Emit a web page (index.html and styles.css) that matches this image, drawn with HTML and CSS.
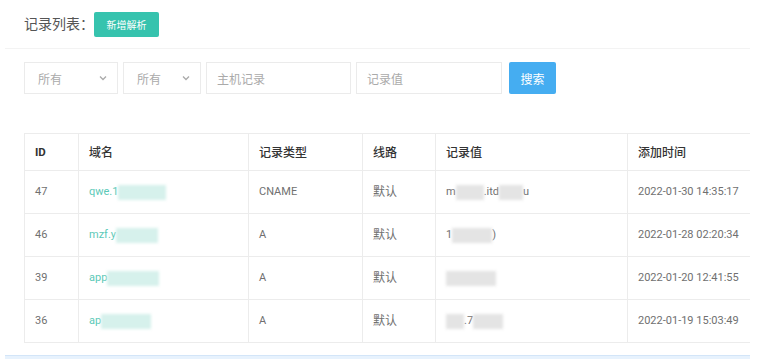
FILE: index.html
```html
<!DOCTYPE html>
<html lang="zh-CN">
<head>
  <meta charset="UTF-8">
  <title>记录列表</title>
  <link rel="stylesheet" href="styles.css">
</head>
<body>
  <div class="page">
    <div class="head">
      <span class="title">记录列表：</span>
      <button class="btn-add">新增解析</button>
    </div>

    <div class="filters">
      <div class="select w1">所有
        <svg class="chev" width="8" height="6" viewBox="0 0 8 6"><path d="M1 1.5 L4 4.5 L7 1.5" fill="none" stroke="#aaa" stroke-width="1.3"/></svg>
      </div>
      <div class="select w2">所有
        <svg class="chev" width="8" height="6" viewBox="0 0 8 6"><path d="M1 1.5 L4 4.5 L7 1.5" fill="none" stroke="#aaa" stroke-width="1.3"/></svg>
      </div>
      <div class="input w3">主机记录</div>
      <div class="input w4">记录值</div>
      <button class="btn-search">搜索</button>
    </div>

    <table class="list">
      <colgroup>
        <col style="width:54px"><col style="width:170px"><col style="width:114px">
        <col style="width:73px"><col style="width:192px"><col style="width:140px">
      </colgroup>
      <thead>
        <tr><th>ID</th><th class="cn">域名</th><th class="cn">记录类型</th><th class="cn">线路</th><th class="cn">记录值</th><th class="cn">添加时间</th></tr>
      </thead>
      <tbody>
        <tr>
          <td>47</td>
          <td class="link">qwe.1<span class="blur teal b1"></span></td>
          <td>CNAME</td><td class="cn">默认</td>
          <td>m<span class="blur gray b2"></span>.itd<span class="blur gray b3"></span>u</td>
          <td>2022-01-30 14:35:17</td>
        </tr>
        <tr>
          <td>46</td>
          <td class="link">mzf.y<span class="blur teal b4"></span></td>
          <td>A</td><td class="cn">默认</td>
          <td>1<span class="blur gray b5"></span>)</td>
          <td>2022-01-28 02:20:34</td>
        </tr>
        <tr>
          <td>39</td>
          <td class="link">app<span class="blur teal b6"></span></td>
          <td>A</td><td class="cn">默认</td>
          <td><span class="blur gray b7"></span></td>
          <td>2022-01-20 12:41:55</td>
        </tr>
        <tr>
          <td>36</td>
          <td class="link">ap<span class="blur teal b8"></span></td>
          <td>A</td><td class="cn">默认</td>
          <td><span class="blur gray b9"></span>.7<span class="blur gray b10"></span></td>
          <td>2022-01-19 15:03:49</td>
        </tr>
      </tbody>
    </table>

    <div class="footbar"></div>
  </div>
</body>
</html>
```

FILE: styles.css
```css
body {
  margin: 0;
  background: #ffffff;
  font-family: Roboto, "Noto Sans CJK SC", sans-serif;
  color: #666;
}
.page {
  margin-left: 5px;
  width: 745px;
  overflow: hidden;
}
.head {
  display: flex;
  align-items: flex-start;
  box-sizing: border-box;
  height: 49px;
  padding-top: 12px;
  padding-left: 19px;
  border-bottom: 1px solid #f3f3f3;
}
.title {
  font-size: 14px;
  color: #555;
  line-height: 25px;
}
.btn-add {
  margin-left: 0;
  width: 65px;
  height: 25px;
  border: none;
  border-radius: 2px;
  background: #36c3ae;
  color: #fff;
  font-family: inherit;
  font-size: 10px;
  padding: 0;
}
.filters {
  display: flex;
  align-items: center;
  gap: 5px;
  padding-left: 19px;
  margin-top: 13px;
  height: 32px;
}
.select, .input {
  box-sizing: border-box;
  height: 32px;
  border: 1px solid #ebebeb;
  font-size: 12px;
  color: #aaa;
  display: flex;
  align-items: center;
  padding-left: 13px;
}
.select {
  justify-content: space-between;
  padding-right: 10px;
}
.input { padding-left: 10px; }
.w1 { width: 94px; }
.w2 { width: 78px; }
.w3 { width: 145px; }
.w4 { width: 146px; }
.chev { display: block; }
.btn-search {
  margin-left: 2px;
  width: 47px;
  height: 32px;
  border: none;
  border-radius: 2px;
  background: #45adf1;
  color: #fff;
  font-family: inherit;
  font-size: 12px;
  padding: 0;
}
.list {
  margin-top: 39px;
  margin-left: 19px;
  width: 743px;
  border-collapse: collapse;
  table-layout: fixed;
  font-size: 11px;
}
.list th, .list td {
  border: 1px solid #ececec;
  text-align: left;
  padding: 0 0 0 10px;
  white-space: nowrap;
  overflow: hidden;
  line-height: 16px;
}
.list th {
  height: 36px;
  color: #333;
  font-size: 11.5px;
  font-weight: bold;
}
.list td {
  height: 42px;
  color: #707070;
}
.list .cn {
  font-family: "Noto Sans CJK SC", sans-serif;
  font-size: 12px;
}
.list th.cn { font-weight: 500; }
.list td.cn {
  height: 39px;
  padding-bottom: 3px;
}
.list td.link { color: #5cc9b8; }
.blur {
  display: inline-block;
  height: 15px;
  vertical-align: middle;
  filter: blur(1.5px);
}
.teal { background: #d6f1ec; }
.gray { background: #e4e4e4; }
.b1 { width: 48px; }
.b2 { width: 28px; }
.b3 { width: 24px; }
.b4 { width: 42px; }
.b5 { width: 40px; }
.b6 { width: 52px; }
.b7 { width: 50px; }
.b8 { width: 50px; }
.b9 { width: 18px; }
.b10 { width: 30px; }
.footbar {
  margin-top: 12px;
  height: 8px;
  background: #e7f2fd;
  border-top: 1px solid #d3e5f8;
}
```
